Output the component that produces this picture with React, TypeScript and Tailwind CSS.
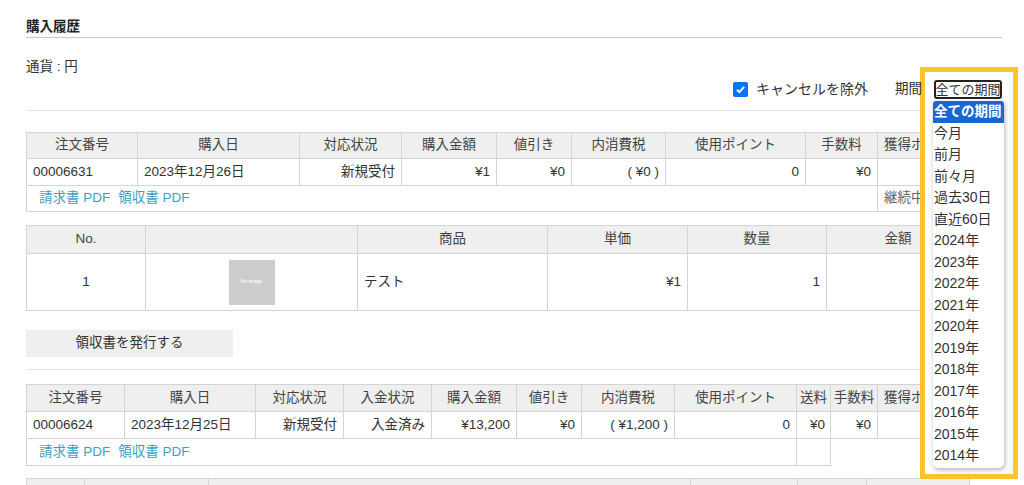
import React from 'react';

const th = 'border border-[#d4d4d4] bg-[#efefef] font-normal text-center px-[6px] whitespace-nowrap text-[#444]';
const td = 'border border-[#d4d4d4] px-[6px] whitespace-nowrap';

const periods = [
  '全ての期間', '今月', '前月', '前々月', '過去30日', '直近60日',
  '2024年', '2023年', '2022年', '2021年', '2020年', '2019年', '2018年',
  '2017年', '2016年', '2015年', '2014年',
];

const PdfLinks: React.FC = () => (
  <div className="flex gap-[8px] pl-[6px] text-[#3d9fc6]">
    <span>請求書 PDF</span>
    <span>領収書 PDF</span>
  </div>
);

const App: React.FC = () => {
  return (
    <div className="relative w-[1024px] h-[485px] overflow-hidden bg-white text-[#333] font-['Liberation_Sans','Noto_Sans_CJK_JP',sans-serif]">
      <div className="ml-[26px] w-[976px]">
        {/* heading */}
        <div className="pt-[18px]">
          <div className="text-[13.5px] font-semibold leading-[18px] pb-[1px] border-b border-[#c8c8c8] text-[#222]">
            購入履歴
          </div>
        </div>

        <div className="mt-[20px] text-[13.5px] leading-[18px]">通貨 : 円</div>

        {/* filter row */}
        <div className="relative z-10 mt-[3px] h-[20px] flex items-center justify-end text-[14px]">
          <label className="flex items-center gap-[8px]">
            <span className="w-[15px] h-[15px] rounded-[2px] bg-[#0075ff] flex items-center justify-center">
              <svg width="11" height="11" viewBox="0 0 10 10">
                <path d="M1.8 5.2 L4 7.4 L8.3 2.6" fill="none" stroke="white" strokeWidth="1.8" />
              </svg>
            </span>
            <span>キャンセルを除外</span>
          </label>
          <span className="ml-[27px] text-[13.5px]">期間</span>
          <div className="ml-[12px] h-[19px] w-[68px] border-2 border-[#222] rounded-[3px] flex items-center justify-center text-[13px] leading-none whitespace-nowrap bg-white">
            全ての期間
          </div>
        </div>

        <div className="mt-[11px] border-t border-[#e4e4e4]" />

        {/* order 1 */}
        <table className="mt-[21px] w-[944px] table-fixed border-collapse text-[13.5px]">
          <colgroup>
            <col className="w-[111px]" />
            <col className="w-[162px]" />
            <col className="w-[102px]" />
            <col className="w-[95px]" />
            <col className="w-[75px]" />
            <col className="w-[94px]" />
            <col className="w-[140px]" />
            <col className="w-[72px]" />
            <col />
          </colgroup>
          <thead>
            <tr className="h-[26px]">
              <th className={th}>注文番号</th>
              <th className={th}>購入日</th>
              <th className={th}>対応状況</th>
              <th className={th}>購入金額</th>
              <th className={th}>値引き</th>
              <th className={th}>内消費税</th>
              <th className={th}>使用ポイント</th>
              <th className={th}>手数料</th>
              <th className={th}>獲得ポイント</th>
            </tr>
          </thead>
          <tbody>
            <tr className="h-[27px]">
              <td className={td}>00006631</td>
              <td className={td}>2023年12月26日</td>
              <td className={`${td} text-right`}>新規受付</td>
              <td className={`${td} text-right`}>¥1</td>
              <td className={`${td} text-right`}>¥0</td>
              <td className={`${td} text-right`}>( ¥0 )</td>
              <td className={`${td} text-right`}>0</td>
              <td className={`${td} text-right`}>¥0</td>
              <td className={td}></td>
            </tr>
            <tr className="h-[26px]">
              <td className={td} colSpan={8}>
                <PdfLinks />
              </td>
              <td className={`${td} text-[#666]`}>継続中</td>
            </tr>
          </tbody>
        </table>

        {/* items */}
        <table className="mt-[13px] w-[944px] table-fixed border-collapse text-[13.5px]">
          <colgroup>
            <col className="w-[119px]" />
            <col className="w-[212px]" />
            <col className="w-[190px]" />
            <col className="w-[140px]" />
            <col className="w-[139px]" />
            <col />
          </colgroup>
          <thead>
            <tr className="h-[28px]">
              <th className={th}>No.</th>
              <th className={th}></th>
              <th className={th}>商品</th>
              <th className={th}>単価</th>
              <th className={th}>数量</th>
              <th className={th}>金額</th>
            </tr>
          </thead>
          <tbody>
            <tr className="h-[57px]">
              <td className={`${td} text-center`}>1</td>
              <td className={td}>
                <div className="mx-auto w-[46px] h-[45px] bg-[#cccccc] flex items-center justify-center text-[5px] text-white">
                  No-image
                </div>
              </td>
              <td className={td}>テスト</td>
              <td className={`${td} text-right`}>¥1</td>
              <td className={`${td} text-right`}>1</td>
              <td className={`${td} text-right`}>¥1</td>
            </tr>
          </tbody>
        </table>

        <button className="mt-[19px] h-[27px] w-[207px] bg-[#efefef] text-[13.5px] text-[#333]">
          領収書を発行する
        </button>

        <div className="mt-[12px] border-t border-[#e4e4e4]" />

        {/* order 2 */}
        <table className="mt-[14px] w-[944px] table-fixed border-collapse text-[13.5px]">
          <colgroup>
            <col className="w-[98px]" />
            <col className="w-[131px]" />
            <col className="w-[88px]" />
            <col className="w-[88px]" />
            <col className="w-[85px]" />
            <col className="w-[65px]" />
            <col className="w-[93px]" />
            <col className="w-[122px]" />
            <col className="w-[34px]" />
            <col className="w-[47px]" />
            <col />
          </colgroup>
          <thead>
            <tr className="h-[27px]">
              <th className={th}>注文番号</th>
              <th className={th}>購入日</th>
              <th className={th}>対応状況</th>
              <th className={th}>入金状況</th>
              <th className={th}>購入金額</th>
              <th className={th}>値引き</th>
              <th className={th}>内消費税</th>
              <th className={th}>使用ポイント</th>
              <th className={`${th} !px-[2px]`}>送料</th>
              <th className={`${th} !px-[2px]`}>手数料</th>
              <th className={`${th} text-left`}>獲得ポイント</th>
            </tr>
          </thead>
          <tbody>
            <tr className="h-[27px]">
              <td className={td}>00006624</td>
              <td className={td}>2023年12月25日</td>
              <td className={`${td} text-right`}>新規受付</td>
              <td className={`${td} text-right`}>入金済み</td>
              <td className={`${td} text-right`}>¥13,200</td>
              <td className={`${td} text-right`}>¥0</td>
              <td className={`${td} text-right`}>( ¥1,200 )</td>
              <td className={`${td} text-right`}>0</td>
              <td className={`${td} text-right !px-[5px]`}>¥0</td>
              <td className={`${td} text-right`}>¥0</td>
              <td className={td}></td>
            </tr>
            <tr className="h-[27px]">
              <td className={td} colSpan={8}>
                <PdfLinks />
              </td>
              <td className={td}></td>
            </tr>
          </tbody>
        </table>

        {/* next order, header row only peeks in at the bottom */}
        <table className="mt-[12px] w-[944px] table-fixed border-collapse">
          <colgroup>
            <col className="w-[58px]" />
            <col className="w-[124px]" />
            <col className="w-[482px]" />
            <col className="w-[107px]" />
            <col className="w-[69px]" />
            <col />
          </colgroup>
          <thead>
            <tr className="h-[27px]">
              <th className={th}></th>
              <th className={th}></th>
              <th className={th}></th>
              <th className={th}></th>
              <th className={th}></th>
              <th className={th}></th>
            </tr>
          </thead>
        </table>
      </div>

      {/* highlighted period dropdown */}
      <div className="absolute left-[920px] top-[67px] w-[98px] h-[412px] border-[5px] border-[#fbc42a] bg-white">
        <div className="absolute left-[8px] top-[29px] w-[71px] bg-white rounded-b-[5px] shadow-[1px_2px_5px_rgba(0,0,0,0.3)] pb-[1px]">
          {periods.map((p, i) => (
            <div
              key={p}
              className={
                i === 0
                  ? 'h-[21.5px] leading-[21.5px] px-[1px] text-[13.5px] whitespace-nowrap text-white font-bold bg-[#1967d2] rounded-t-[3px]'
                  : 'h-[21.5px] leading-[21.5px] px-[1px] text-[14px] whitespace-nowrap text-[#333]'
              }
            >
              {p}
            </div>
          ))}
        </div>
      </div>
    </div>
  );
};

export default App;
